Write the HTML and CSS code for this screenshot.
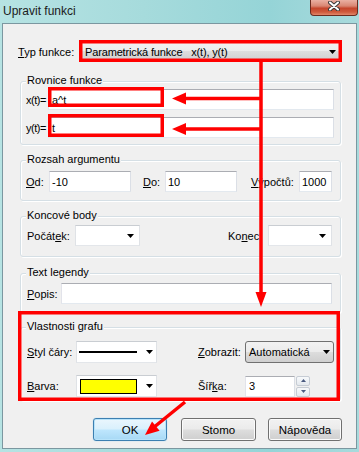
FILE: index.html
```html
<!DOCTYPE html>
<html lang="cs">
<head>
<meta charset="utf-8">
<title>Upravit funkci</title>
<link rel="stylesheet" href="styles.css">
</head>
<body>
<div class="titlebar">
  <span class="title">Upravit funkci</span>
  <div class="close">
    <svg width="12" height="10" viewBox="0 0 12 10"><path d="M2 1.5L10 8.5M10 1.5L2 8.5" stroke="#3a3a3a" stroke-width="4" stroke-linecap="round"/><path d="M2 1.5L10 8.5M10 1.5L2 8.5" stroke="#fff" stroke-width="2" stroke-linecap="round"/></svg>
  </div>
</div>
<div class="client">
  <div class="type-row">
    <span class="lbl lbl-type"><u>T</u>yp funkce:</span>
    <div class="dropbtn dd-type"><span class="ddtext">Parametrická funkce   x(t), y(t)</span><svg class="arr" width="7" height="4" viewBox="0 0 7 4"><path d="M0 0h7L3.5 4z"/></svg></div>
  </div>

  <div class="group g1">
    <div class="legend">Rovnice funkce</div>
    <div class="row r1"><span class="lbl lbl-xt">x(t)=</span><div class="tb grow">a^t</div></div>
    <div class="row r2"><span class="lbl lbl-xt">y(t)=</span><div class="tb grow">t</div></div>
  </div>

  <div class="group g2">
    <div class="legend">Rozsah argumentu</div>
    <div class="row">
      <span class="lbl lbl-od"><u>O</u>d:</span><div class="tb tb-od">-10</div>
      <span class="lbl lbl-do"><u>D</u>o:</span><div class="tb tb-do">10</div>
      <span class="lbl lbl-vyp"><u>V</u>ýpočtů:</span><div class="tb tb-vyp">1000</div>
    </div>
  </div>

  <div class="group g3">
    <div class="legend">Koncové body</div>
    <div class="row">
      <span class="lbl lbl-poc">Počát<u>e</u>k:</span>
      <div class="cb cb-poc"><svg class="arr" width="7" height="4" viewBox="0 0 7 4"><path d="M0 0h7L3.5 4z"/></svg></div>
      <span class="lbl lbl-kon">Ko<u>n</u>ec:</span>
      <div class="cb cb-kon"><svg class="arr" width="7" height="4" viewBox="0 0 7 4"><path d="M0 0h7L3.5 4z"/></svg></div>
    </div>
  </div>

  <div class="group g4">
    <div class="legend">Text legendy</div>
    <div class="row">
      <span class="lbl lbl-popis"><u>P</u>opis:</span><div class="tb grow"></div>
    </div>
  </div>

  <div class="group g5">
    <div class="legend">Vlastnosti grafu</div>
    <div class="row row5a">
      <span class="lbl lbl-g5"><u>S</u>tyl čáry:</span>
      <div class="cb cb-g5 cb-styl"><span class="linesample"></span><svg class="arr" width="7" height="4" viewBox="0 0 7 4"><path d="M0 0h7L3.5 4z"/></svg></div>
      <span class="lbl lbl-g5r"><u>Z</u>obrazit:</span>
      <div class="dropbtn dd-zob">Automatická<svg class="arr" width="7" height="4" viewBox="0 0 7 4"><path d="M0 0h7L3.5 4z"/></svg></div>
    </div>
    <div class="row row5b">
      <span class="lbl lbl-g5"><u>B</u>arva:</span>
      <div class="cb cb-g5 cb-barva"><span class="swatch"></span><svg class="arr" width="7" height="4" viewBox="0 0 7 4"><path d="M0 0h7L3.5 4z"/></svg></div>
      <span class="lbl lbl-g5r">Šíř<u>k</u>a:</span>
      <div class="tb tb-sirka">3</div>
      <div class="spin">
        <div class="sp"><svg width="5" height="3" viewBox="0 0 5 3"><path d="M2.5 0L5 3H0z"/></svg></div>
        <div class="sp"><svg width="5" height="3" viewBox="0 0 5 3"><path d="M0 0h5L2.5 3z"/></svg></div>
      </div>
    </div>
  </div>

  <div class="btns">
    <div class="btn def">OK</div>
    <div class="btn btn-stomo">Stomo</div>
    <div class="btn btn-help">Nápověda</div>
  </div>
</div>

<svg class="annot" width="359" height="452" viewBox="0 0 359 452">
  <g fill="none" stroke="#ff0000" stroke-width="3.5">
    <rect x="80.75" y="41.75" width="259.5" height="18.5"/>
    <rect x="49.75" y="88.75" width="112.5" height="16.5"/>
    <rect x="49.75" y="115.75" width="112.5" height="19.5"/>
    <rect x="19.75" y="312.75" width="318.5" height="86.5"/>
    <path d="M261 62V295M262.5 98.5H184M262.5 129H184M185 402L153 428"/>
  </g>
  <g fill="#ff0000">
    <polygon points="255.5,292 266.5,292 261,307"/>
    <polygon points="172,98.5 186,92.5 186,104.5"/>
    <polygon points="172,129 186,123 186,135"/>
    <polygon points="145,435 159.6,430.7 152,421.5"/>
  </g>
</svg>
</body>
</html>
```

FILE: styles.css
```css
body {
  margin: 0;
  width: 359px;
  height: 452px;
  overflow: hidden;
  position: relative;
  background: linear-gradient(90deg, #b6e3e3 0%, #a6dbdc 40%, #95d4d7 75%, #a8dadc 100%);
  font: 11px "Liberation Sans", Arial, sans-serif;
  color: #000;
}

.titlebar {
  height: 23px;
  display: flex;
  align-items: flex-start;
}

.title {
  font-size: 12px;
  line-height: 14px;
  padding: 4px 0 0 3px;
  color: #1b1b1b;
}

.close {
  margin-left: auto;
  margin-right: 1px;
  width: 48px;
  height: 16px;
  box-sizing: border-box;
  border: 1px solid #6b2b1f;
  border-top: none;
  border-radius: 0 0 4px 4px;
  background: linear-gradient(#eab0a2 0%, #d98672 40%, #c5452b 55%, #cf5a3c 80%, #e1876a 100%);
  display: flex;
  justify-content: center;
  align-items: flex-start;
  padding-top: 1px;
}

.client {
  margin: 0 2px;
  height: 424px;
  border: 1px solid #7b97a0;
  background: #f0f0f0;
}

.lbl {
  white-space: nowrap;
  flex: none;
}

.type-row {
  display: flex;
  align-items: center;
  height: 21px;
  margin-top: 17px;
  padding-left: 15px;
}

.lbl-type { width: 62px; }

.dropbtn {
  box-sizing: border-box;
  height: 21px;
  border: 1px solid #707070;
  border-radius: 3px;
  background: linear-gradient(#f2f2f2 0%, #ebebeb 50%, #dddddd 50%, #cfcfcf 100%);
  display: flex;
  align-items: center;
  padding: 0 5px 0 4px;
  white-space: pre;
  flex: none;
}

.dd-type { width: 262px; }
.ddtext { letter-spacing: -0.15px; }

.arr {
  margin-left: auto;
  flex: none;
}
.arr path { fill: #000; }

.group {
  margin: 15px 15px 0 17px;
  border: 1px solid #d5dfe5;
  border-radius: 3px;
  box-shadow: inset 1px 1px 0 #fff, 1px 1px 0 #fff;
}

.legend {
  width: fit-content;
  margin: -9px 0 0 5px;
  padding: 0 1px;
  line-height: 14px;
  height: 14px;
  background: #f0f0f0;
}

.row {
  display: flex;
  align-items: center;
}

.tb {
  box-sizing: border-box;
  height: 21px;
  background: #fff;
  border: 1px solid;
  border-color: #abadb3 #dbdfe6 #e3e9ef #e2e3ea;
  padding: 0 3px;
  display: flex;
  align-items: center;
  flex: none;
  color: #000;
}

.grow { flex: 1; }

.cb {
  box-sizing: border-box;
  height: 21px;
  background: #fff;
  border: 1px solid;
  border-color: #c9cdd2 #dfe2e6 #e3e6ea #dfe2e6;
  display: flex;
  align-items: center;
  padding: 0 5px 0 3px;
  flex: none;
}

/* group 1 */
.g1 {
  margin-top: 19px;
  padding-bottom: 6px;
}
.g1 .row {
  padding: 0 6px 0 5px;
}
.g1 .r1 { margin-top: 2px; }
.g1 .r2 { margin-top: 7px; }
.lbl-xt {
  width: 22px;
  letter-spacing: -0.5px;
}

/* group 2 */
.g2 { padding-bottom: 8px; }
.g2 .row {
  margin-top: 5px;
  padding-left: 5px;
}
.lbl-od { width: 23px; }
.tb-od { width: 82px; padding-left: 2px; }
.lbl-do { width: 22px; margin-left: 12px; }
.tb-do { width: 72px; padding-left: 2px; }
.lbl-vyp { width: 48px; margin-left: 14px; }
.tb-vyp { width: 33px; padding-left: 2px; }

/* group 3 */
.g3 { padding-bottom: 10px; }
.g3 .row {
  margin-top: 3px;
  padding: 0 8px 0 6px;
}
.lbl-poc { width: 48px; }
.cb-poc { width: 65px; }
.lbl-kon { width: 40px; margin-left: auto; }
.cb-kon { width: 64px; }

/* group 4 */
.g4 {
  margin-top: 16px;
  padding-bottom: 8px;
}
.g4 .row {
  margin-top: 4px;
  padding: 0 8px 0 6px;
}
.lbl-popis { width: 34px; }

/* group 5 */
.g5 {
  margin-top: 14px;
  padding-bottom: 3px;
}
.g5 .row {
  padding-left: 6px;
  height: 22px;
}
.row5a { margin-top: 8px; }
.row5b { margin-top: 12px; }
.lbl-g5 { width: 49px; }
.lbl-g5r { width: 47px; margin-left: 41px; }
.cb-g5 {
  width: 81px;
  height: 22px;
}
.cb-styl { padding: 0 3px 0 2px; }
.cb-barva { padding: 0 3px 0 3px; }

.linesample {
  width: 58px;
  height: 2px;
  background: #000;
  flex: none;
}

.swatch {
  box-sizing: border-box;
  width: 57px;
  height: 15px;
  background: #ffff00;
  border: 1px solid #000;
  flex: none;
}

.dd-zob {
  width: 89px;
  height: 22px;
  padding: 0 3px 0 3px;
}

.tb-sirka {
  width: 50px;
  height: 21px;
  padding-left: 3px;
}

.spin {
  display: flex;
  flex-direction: column;
  gap: 1px;
  margin-left: 1px;
  width: 14px;
  height: 21px;
  flex: none;
}

.sp {
  flex: 1;
  box-sizing: border-box;
  border: 1px solid #c6ccd4;
  border-radius: 2px;
  background: linear-gradient(#f7f9fb, #e4e9ee);
  display: flex;
  align-items: center;
  justify-content: center;
}
.sp path { fill: #4a5a80; }

/* buttons */
.btns {
  display: flex;
  margin: 17px 0 0 90px;
}

.btn {
  box-sizing: border-box;
  width: 74px;
  height: 23px;
  border: 1px solid #707070;
  border-radius: 3px;
  background: linear-gradient(#f2f2f2 0%, #ebebeb 48%, #dddddd 52%, #cfcfcf 100%);
  box-shadow: inset 0 0 0 1px #fbfbfb;
  display: flex;
  align-items: center;
  justify-content: center;
  font-size: 11.5px;
  flex: none;
}

.btn.def {
  border-color: #3c7fb1;
  background: linear-gradient(#eaf6fd 0%, #d9f0fc 48%, #bee6fd 52%, #a7d9f5 100%);
  box-shadow: inset 0 0 0 1px #b7e3fa, 0 0 1px #6fc3ee;
}

.btn-stomo { width: 75px; margin-left: 14px; }
.btn-help { margin-left: 12px; }

.annot {
  position: absolute;
  top: 0;
  left: 0;
  pointer-events: none;
}
```
